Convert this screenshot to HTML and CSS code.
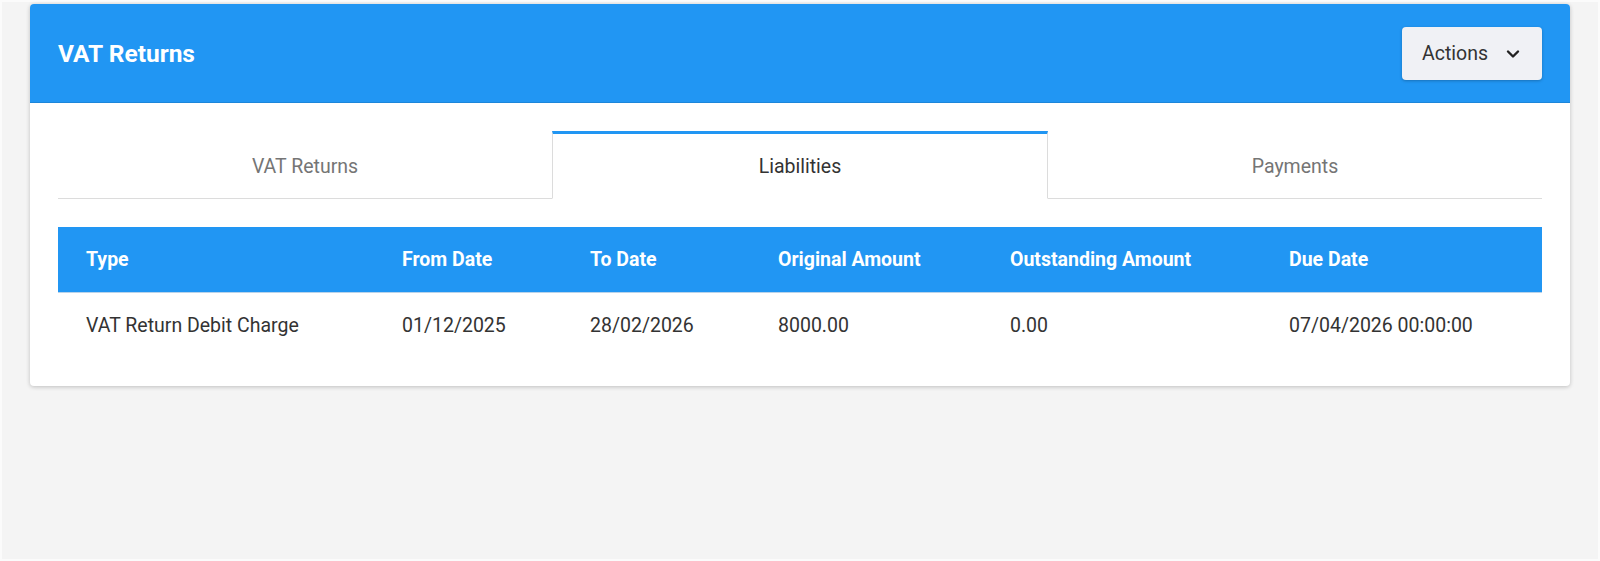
FILE: index.html
```html
<!DOCTYPE html>
<html>
<head>
<meta charset="utf-8">
<link rel="stylesheet" href="styles.css">
</head>
<body>
<div class="page">
  <div class="card">
    <div class="card-header">
      <h1 class="title">VAT Returns</h1>
      <button class="actions">Actions
        <svg class="chev" viewBox="0 0 14 10" width="14" height="10"><path d="M2 2.5 L7 7.5 L12 2.5" fill="none" stroke="#222" stroke-width="2.4" stroke-linecap="round" stroke-linejoin="round"/></svg>
      </button>
    </div>
    <div class="card-body">
      <div class="tabs">
        <div class="tab">VAT Returns</div>
        <div class="tab active">Liabilities</div>
        <div class="tab">Payments</div>
      </div>
      <table class="grid">
        <colgroup>
          <col class="c1"><col class="c2"><col class="c3"><col class="c4"><col class="c5"><col class="c6">
        </colgroup>
        <thead>
          <tr><th>Type</th><th>From Date</th><th>To Date</th><th>Original Amount</th><th>Outstanding Amount</th><th>Due Date</th></tr>
        </thead>
        <tbody>
          <tr><td>VAT Return Debit Charge</td><td>01/12/2025</td><td>28/02/2026</td><td>8000.00</td><td>0.00</td><td>07/04/2026 00:00:00</td></tr>
        </tbody>
      </table>
    </div>
  </div>
</div>
</body>
</html>
```

FILE: styles.css
```css
html, body {
  margin: 0;
  padding: 0;
}
body {
  font-family: Roboto, "Liberation Sans", Arial, sans-serif;
  background: #f4f4f4;
}
.page {
  box-sizing: border-box;
  height: 561px;
  border: 2px solid #fbfbfb;
  padding: 2px 28px 0 28px;
  background: #f4f4f4;
}
.card {
  background: #fff;
  border-radius: 4px;
  box-shadow: 0 1px 4px rgba(0,0,0,0.22);
  overflow: hidden;
}
.card-header {
  background: #2196f3;
  height: 98px;
  border-bottom: 1px solid #1c86da;
  display: flex;
  align-items: center;
  justify-content: space-between;
  padding: 0 28px;
}
.title {
  margin: 0;
  color: #fff;
  font-size: 24.5px;
  font-weight: 700;
}
.actions {
  display: flex;
  align-items: center;
  gap: 18px;
  height: 53px;
  width: 140px;
  padding: 0 0 0 20px;
  margin-top: 0;
  border: none;
  border-radius: 4px;
  background: #f0f1f5;
  box-shadow: 0 1px 3px rgba(0,0,0,0.25);
  font-family: Roboto, "Liberation Sans", Arial, sans-serif;
  font-size: 19.5px;
  color: #333;
}
.chev {
  display: block;
  margin-top: 2px;
}
.card-body {
  padding: 28px 28px 28px 28px;
}
.tabs {
  display: flex;
  margin-bottom: 28px;
}
.tab {
  flex: 1;
  height: 64px;
  border-top: 3px solid transparent;
  border-bottom: 1px solid #dcdcdc;
  display: flex;
  align-items: center;
  justify-content: center;
  font-size: 19.5px;
  color: #757575;
}
.tab.active {
  border-top: 3px solid #2196f3;
  border-left: 1px solid #dcdcdc;
  border-right: 1px solid #dcdcdc;
  border-bottom: 1px solid transparent;
  color: #333;
}
.grid {
  width: 100%;
  border-collapse: collapse;
  table-layout: fixed;
  font-size: 19.5px;
}
.c1 { width: 316px; }
.c2 { width: 188px; }
.c3 { width: 188px; }
.c4 { width: 232px; }
.c5 { width: 279px; }
.grid th {
  background: #2196f3;
  color: #fff;
  font-weight: 700;
  text-align: left;
  height: 65px;
  padding: 0 0 0 28px;
  border-bottom: 1px solid #b9d3ea;
}
.grid td {
  color: #333;
  height: 65px;
  padding: 0 0 0 28px;
  white-space: nowrap;
}
```
